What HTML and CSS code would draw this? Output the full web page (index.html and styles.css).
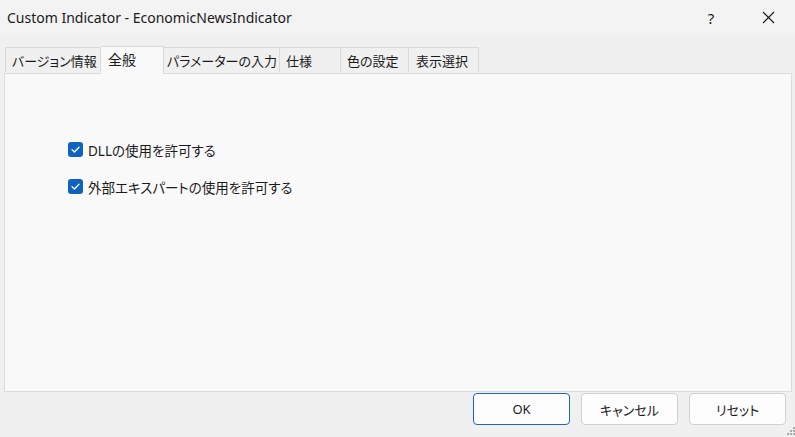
FILE: index.html
```html
<!DOCTYPE html>
<html>
<head>
    <title>Custom Indicator - EconomicNewsIndicator</title>
    <link rel="stylesheet" href="styles.css">
</head>
<body>

    <div class="window">
        <div class="titlebar">
            <span class="title">Custom Indicator - EconomicNewsIndicator</span>
            <div class="caption">
                <span class="caption-btn help">?</span>
                <span class="caption-btn close">
                    <svg width="13" height="13" viewBox="0 0 13 13"><path d="M1 1 L12 12 M12 1 L1 12" stroke="#1a1a1a" stroke-width="1.1" fill="none"/></svg>
                </span>
            </div>
        </div>

        <div class="client">
            <div class="tabs">
                <div class="tab tab-version">バージョン情報</div>
                <div class="tab tab-general active">全般</div>
                <div class="tab tab-params">パラメーターの入力</div>
                <div class="tab tab-spec">仕様</div>
                <div class="tab tab-colors">色の設定</div>
                <div class="tab tab-visual">表示選択</div>
            </div>

            <div class="panel">
                <div class="options">
                    <label class="option">
                        <span class="check">
                            <svg width="15" height="15" viewBox="0 0 15 15"><path d="M4 7.6 L6.4 10 L11 5.3" stroke="#fff" stroke-width="1.3" fill="none" stroke-linecap="round" stroke-linejoin="round"/></svg>
                        </span>
                        DLLの使用を許可する
                    </label>
                    <label class="option">
                        <span class="check">
                            <svg width="15" height="15" viewBox="0 0 15 15"><path d="M4 7.6 L6.4 10 L11 5.3" stroke="#fff" stroke-width="1.3" fill="none" stroke-linecap="round" stroke-linejoin="round"/></svg>
                        </span>
                        外部エキスパートの使用を許可する
                    </label>
                </div>
            </div>

            <div class="buttons">
                <button class="default">OK</button>
                <button>キャンセル</button>
                <button>リセット</button>
            </div>

            <svg class="grip" width="8" height="8" viewBox="0 0 8 8">
                <rect x="6" y="0" width="2" height="2" fill="#a8a8a8"/>
                <rect x="3" y="3" width="2" height="2" fill="#a8a8a8"/>
                <rect x="6" y="3" width="2" height="2" fill="#a8a8a8"/>
                <rect x="0" y="6" width="2" height="2" fill="#a8a8a8"/>
                <rect x="3" y="6" width="2" height="2" fill="#a8a8a8"/>
                <rect x="6" y="6" width="2" height="2" fill="#a8a8a8"/>
            </svg>
        </div>
    </div>

</body>
</html>
```

FILE: styles.css
```css
* {
    box-sizing: border-box;
}

body {
    margin: 0;
    background-color: #f0f0f0;
    font-family: "Segoe UI", "Noto Sans", "Noto Sans CJK JP", sans-serif;
    font-feature-settings: "palt";
    color: #1a1a1a;
}

.window {
    width: 795px;
    height: 437px;
    display: flex;
    flex-direction: column;
}

.titlebar {
    height: 35px;
    flex-shrink: 0;
    display: flex;
    align-items: center;
    justify-content: space-between;
    padding-left: 7px;
    background-color: #f3f3f3;
}

.title {
    font-size: 14px;
}

.caption {
    display: flex;
    align-items: center;
    gap: 43px;
    padding-right: 20px;
}

.caption-btn {
    width: 14px;
    display: flex;
    justify-content: center;
    font-size: 15px;
}

.client {
    flex: 1;
    position: relative;
    display: flex;
    flex-direction: column;
    background-color: #f0f0f0;
}

.tabs {
    display: flex;
    align-items: flex-end;
    height: 38px;
    padding-left: 5px;
}

.tab {
    height: 25px;
    padding: 0 0 0 6px;
    display: flex;
    align-items: center;
    white-space: nowrap;
    font-size: 13px;
    border: 1px solid #d9d9d9;
    border-bottom: none;
    border-left: none;
    margin-bottom: 1px;
}

.tab-version {
    width: 96px;
    border-left: 1px solid #d9d9d9;
}

.tab-general {
    width: 63px;
}

.tab-params {
    width: 116px;
    padding-left: 3px;
}

.tab-spec {
    width: 61px;
}

.tab-colors {
    width: 68px;
}

.tab-visual {
    width: 70px;
    padding-left: 7px;
}

.tab.active {
    height: 28px;
    margin-bottom: -1px;
    padding: 0 0 3px 7px;
    font-size: 14px;
    background-color: #f9f9f9;
    position: relative;
    z-index: 1;
}

.panel {
    height: 319px;
    margin: 0 3px 0 4px;
    background-color: #f9f9f9;
    border: 1px solid #dcdcdc;
}

.options {
    display: flex;
    flex-direction: column;
    gap: 22px;
    padding: 68px 0 0 63px;
}

.option {
    height: 15px;
    display: flex;
    align-items: center;
    gap: 5px;
    font-size: 13.5px;
}

.check {
    width: 15px;
    height: 15px;
    border-radius: 3px;
    background-color: #0f63be;
    display: flex;
}

.buttons {
    display: flex;
    justify-content: flex-end;
    gap: 11px;
    padding: 1px 9px 0 0;
}

button {
    width: 97px;
    height: 32px;
    background-color: #fdfdfd;
    border: 1px solid #d0d0d0;
    border-radius: 4px;
    font-family: inherit;
    font-feature-settings: "palt";
    font-size: 13px;
    color: #1a1a1a;
}

button.default {
    border-color: #1a67be;
}

.grip {
    position: absolute;
    right: 0;
    bottom: 2px;
}
```
